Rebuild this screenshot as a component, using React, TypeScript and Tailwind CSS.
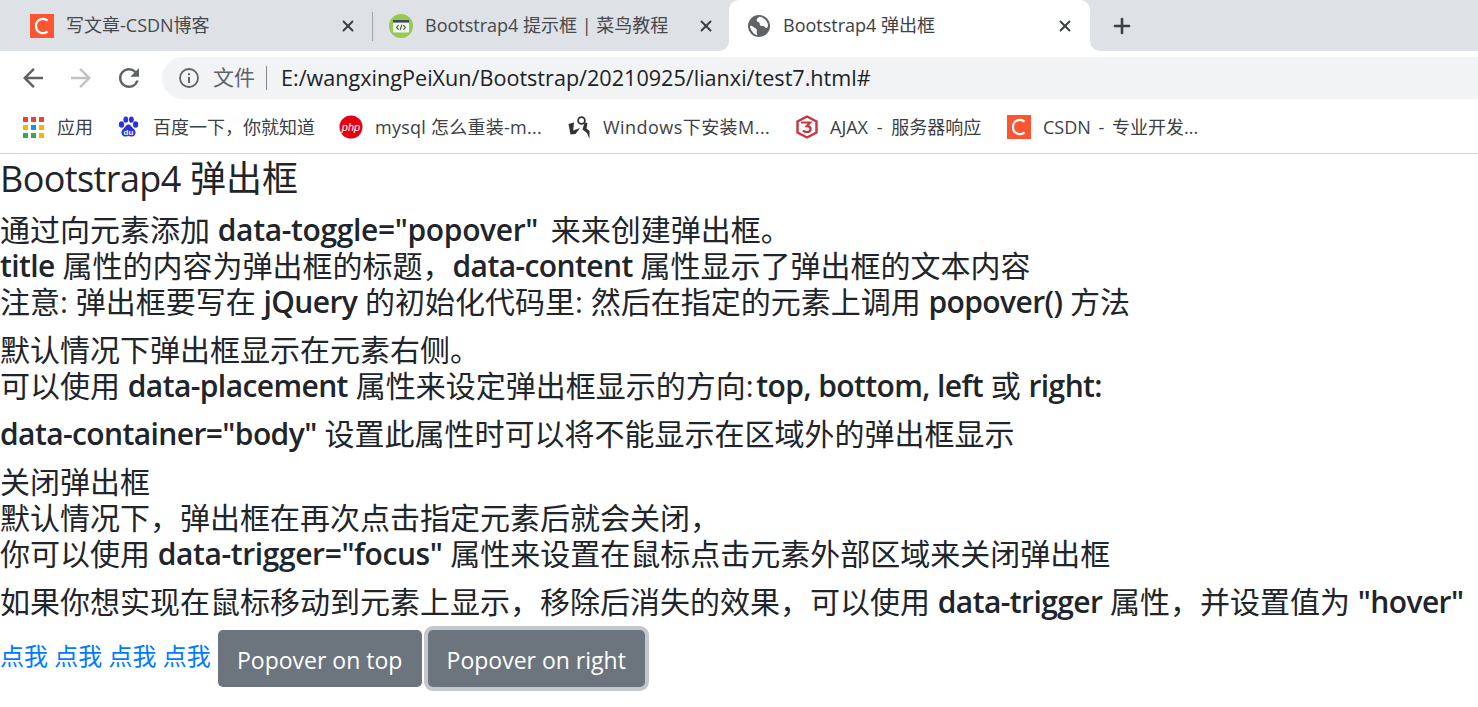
import type { ReactNode } from "react"
import { Plus, X } from "lucide-react"

const fontStack = "font-['Open_Sans','Noto_Sans_CJK_SC',sans-serif]"

function CsdnIcon({ size = 24 }: { size?: number }) {
  return (
    <svg width={size} height={size} viewBox="0 0 24 24" className="shrink-0">
      <rect width="24" height="24" fill="#fc5531" />
      <path d="M17.6 6.6A7 7 0 0 0 6 12a7 7 0 0 0 11.6 5.4" fill="none" stroke="#fff" strokeWidth="2.2" />
    </svg>
  )
}

function RunoobIcon() {
  return (
    <svg width="24" height="24" viewBox="0 0 24 24" className="shrink-0">
      <circle cx="12" cy="12" r="12" fill="#96c952" />
      <rect x="4" y="6" width="16" height="12.5" rx="0.8" fill="#f2f4ef" />
      <rect x="4" y="6" width="16" height="2.6" fill="#3e4a52" />
      <path d="M9.6 11.2 7.6 13.4l2 2.2M14.4 11.2l2 2.2-2 2.2M12.9 10.8l-1.8 5.2" fill="none" stroke="#4a5548" strokeWidth="1.1" />
    </svg>
  )
}

function GlobeIcon() {
  return (
    <svg width="22" height="22" viewBox="0 0 22 22" className="shrink-0">
      <circle cx="11" cy="11" r="11" fill="#5f6368" />
      <path d="M11.5 1.8C9.8 3 8.4 4.2 8.6 5.6c.2 1.4 2 1.4 2.8 2.2.8 1-.2 2 1 2.8 1 .6 2.4 0 3.4.5 1 .4 1.2 1.8 2.2 2 .9.2 1.6-1 2-2.4V9.4c-1-3.8-4.4-7.2-8.5-7.6ZM1.8 10.6c1.5.2 2.8.7 4 1.6 1 .8 2.2 1.2 2.9 2.2.7 1-.2 2-.1 3 .1 1 .8 1.9.9 2.8-4-.9-7.2-4.8-7.6-9.6Z" fill="#fff" />
    </svg>
  )
}

function AppsIcon() {
  const colors = ["#ea4335", "#ea4335", "#ea4335", "#ffb300", "#1a8cff", "#ffb300", "#34a853", "#34a853", "#ffb300"]
  return (
    <div className="grid grid-cols-3 gap-[3px] w-[21px] shrink-0">
      {colors.map((c, i) => (
        <div key={i} className="w-[5px] h-[5px]" style={{ backgroundColor: c }} />
      ))}
    </div>
  )
}

function BaiduIcon() {
  return (
    <svg width="21" height="22" viewBox="0 0 21 22" className="shrink-0">
      <g fill="#2932e1">
        <ellipse cx="3.5" cy="8.5" rx="2.6" ry="3.2" />
        <ellipse cx="7.8" cy="3.6" rx="2.4" ry="3.2" />
        <ellipse cx="13.4" cy="3.6" rx="2.4" ry="3.2" />
        <ellipse cx="17.6" cy="8.5" rx="2.6" ry="3.2" />
        <path d="M10.5 8.5c-2.4 0-3 2.6-5 4.2-2 1.6-2.4 3.4-1.8 5.2.7 2.2 3 2.8 4.4 2.6 1-.2 1.6-.4 2.4-.4s1.4.2 2.4.4c1.4.2 3.7-.4 4.4-2.6.6-1.8.2-3.6-1.8-5.2-2-1.6-2.6-4.2-5-4.2Z" />
      </g>
      <text x="10.5" y="19" textAnchor="middle" fontSize="8" fontWeight="700" fill="#fff" fontFamily="Liberation Sans, sans-serif">du</text>
    </svg>
  )
}

function PhpIcon() {
  return (
    <svg width="24" height="24" viewBox="0 0 24 24" className="shrink-0">
      <circle cx="12" cy="12" r="11.5" fill="#e60012" />
      <text x="12" y="15.5" textAnchor="middle" fontSize="11" fontStyle="italic" fill="#fff" fontFamily="Liberation Sans, sans-serif">php</text>
    </svg>
  )
}

function WinLogo() {
  return (
    <svg width="23" height="24" viewBox="0 0 23 24" className="shrink-0">
      <path d="M0.5 9 6 7.5 5.2 15.5 12 13 7.5 19 2.5 19.5Z" fill="#333" />
      <circle cx="13.5" cy="5.5" r="3.4" fill="none" stroke="#333" strokeWidth="1.8" />
      <path d="M16.5 7.5 14.5 14.5 19 18 21.5 24 21.5 16 18.5 13.5 19.5 8Z" fill="#333" />
    </svg>
  )
}

function AjaxIcon() {
  return (
    <svg width="22" height="24" viewBox="0 0 22 24" className="shrink-0">
      <path d="M11 1.5 20.5 6.5V17.5L11 22.5 1.5 17.5V6.5Z" fill="none" stroke="#c8343f" strokeWidth="2.4" />
      <path d="M5 7.5h9l-3.2 3.6c2.4 0 3.8 1.1 3.8 2.8 0 1.8-1.6 3.1-3.8 3.1-1.5 0-2.8-.5-3.8-1.4" fill="none" stroke="#c8343f" strokeWidth="2.2" />
    </svg>
  )
}

function Bookmark({ icon, label, width, iconWidth, extra = "" }: { icon: ReactNode; label: string; width: string; iconWidth: string; extra?: string }) {
  return (
    <div className={`flex items-center shrink-0 ${width}`}>
      <div className={`flex items-center shrink-0 ${iconWidth}`}>{icon}</div>
      <span className={`text-[18px] text-[#3c4043] whitespace-nowrap ${extra}`}>{label}</span>
    </div>
  )
}

function B({ children, className = "tracking-[-0.6px]" }: { children: ReactNode; className?: string }) {
  return <b className={`font-semibold ${className}`}>{children}</b>
}

function Browser() {
  return (
    <header className={`${fontStack} border-b border-[#d3d4d6]`}>
      {/* tab strip */}
      <div className="flex h-[51px] bg-[#dee1e6]">
        <div className="flex items-center w-[372px] pl-[30px] shrink-0">
          <CsdnIcon />
          <span className="ml-3 text-[18px] text-[#45484c] whitespace-nowrap">写文章-CSDN博客</span>
          <X className="ml-auto mr-[15px] text-[#3c4043]" size={18} strokeWidth={2.6} />
        </div>
        <div className="w-px h-[29px] mt-[12px] bg-[#9fa2a6] shrink-0" />
        <div className="flex items-center w-[356px] pl-[16px] shrink-0">
          <RunoobIcon />
          <span className="ml-3 text-[18px] text-[#45484c] whitespace-nowrap">Bootstrap4 提示框 | 菜鸟教程</span>
          <X className="ml-auto mr-[14px] text-[#3c4043]" size={18} strokeWidth={2.6} />
        </div>
        <div className="relative flex items-center w-[361px] pl-[19px] bg-white rounded-t-[10px] shrink-0">
          <div className="absolute -left-[10px] bottom-0 w-[10px] h-[10px] bg-white">
            <div className="w-full h-full bg-[#dee1e6] rounded-br-[10px]" />
          </div>
          <div className="absolute -right-[10px] bottom-0 w-[10px] h-[10px] bg-white">
            <div className="w-full h-full bg-[#dee1e6] rounded-bl-[10px]" />
          </div>
          <GlobeIcon />
          <span className="ml-[13px] text-[18px] text-[#3c4043] whitespace-nowrap">Bootstrap4 弹出框</span>
          <X className="ml-auto mr-[16px] text-[#3c4043]" size={18} strokeWidth={2.6} />
        </div>
        <div className="flex items-center pl-[20px]">
          <Plus className="text-[#3c4043]" size={24} strokeWidth={2.6} />
        </div>
      </div>

      {/* address bar */}
      <div className="flex items-center h-[52px] pt-[2px] bg-white">
        <div className="flex items-center w-[162px] shrink-0 pl-[18px] gap-[18px]">
          <svg width="30" height="30" viewBox="0 0 24 24" fill="#5f6368" className="shrink-0">
            <path d="M20 11H7.83l5.59-5.59L12 4l-8 8 8 8 1.41-1.41L7.83 13H20v-2z" />
          </svg>
          <svg width="30" height="30" viewBox="0 0 24 24" fill="#c0c2c5" className="shrink-0">
            <path d="M12 4l-1.41 1.41L16.17 11H4v2h12.17l-5.58 5.59L12 20l8-8z" />
          </svg>
          <svg width="30" height="30" viewBox="0 0 24 24" fill="#5f6368" className="shrink-0">
            <path d="M17.65 6.35A7.958 7.958 0 0 0 12 4c-4.42 0-7.99 3.58-7.99 8s3.57 8 7.99 8c3.73 0 6.84-2.55 7.73-6h-2.08A5.99 5.99 0 0 1 12 18c-3.31 0-6-2.69-6-6s2.69-6 6-6c1.66 0 3.14.69 4.22 1.78L13 11h7V4l-2.35 2.35z" />
          </svg>
        </div>
        <div className="flex items-center flex-1 h-[42px] rounded-l-[21px] bg-[#f1f3f4] pl-[17px]">
          <svg width="20" height="20" viewBox="0 0 20 20" className="shrink-0">
            <circle cx="10" cy="10" r="9" fill="none" stroke="#5f6368" strokeWidth="1.8" />
            <rect x="9" y="9" width="2" height="6" fill="#5f6368" />
            <rect x="9" y="5.2" width="2" height="2" fill="#5f6368" />
          </svg>
          <span className="ml-[14px] text-[21px] text-[#5f6368]">文件</span>
          <div className="ml-[11px] w-px h-[24px] bg-[#80868b]" />
          <span className="ml-[14px] text-[21.6px] text-[#202124] whitespace-nowrap">E:/wangxingPeiXun/Bootstrap/20210925/lianxi/test7.html#</span>
        </div>
      </div>

      {/* bookmarks */}
      <div className="flex items-center h-[50px] pb-[2px] bg-white pl-[23px]">
        <Bookmark icon={<AppsIcon />} label="应用" width="w-[95px]" iconWidth="w-[34px]" />
        <Bookmark icon={<BaiduIcon />} label="百度一下，你就知道" width="w-[221px]" iconWidth="w-[35px]" />
        <Bookmark icon={<PhpIcon />} label="mysql 怎么重装-m..." width="w-[229px]" iconWidth="w-[36px]" extra="tracking-[0.25px]" />
        <Bookmark icon={<WinLogo />} label="Windows下安装M..." width="w-[228px]" iconWidth="w-[35px]" extra="tracking-[0.45px]" />
        <Bookmark icon={<AjaxIcon />} label="AJAX - 服务器响应" width="w-[211px]" iconWidth="w-[34px]" extra="[word-spacing:4px]" />
        <Bookmark icon={<CsdnIcon />} label="CSDN - 专业开发..." width="w-[220px]" iconWidth="w-[36px]" extra="[word-spacing:3px]" />
      </div>
    </header>
  )
}

export default function App() {
  return (
    <div className={`${fontStack} h-[707px] overflow-hidden bg-white text-[#212529]`}>
      <Browser />
      <main className="pt-[3px] text-[30px] leading-[36px] whitespace-nowrap">
        <h3 className="text-[36px] leading-[43px] font-normal mb-[12px]">
          <span className="font-medium tracking-[-0.6px]">Bootstrap4</span> 弹出框
        </h3>
        <p className="mb-[12px]">
          通过向元素添加 <B className="tracking-[-0.35px] mr-[5px]">data-toggle="popover"</B> 来来创建弹出框。<br />
          <B>title</B> 属性的内容为弹出框的标题，<B>data-content</B> 属性显示了弹出框的文本内容<br />
          注意: 弹出框要写在 <B>jQuery</B> 的初始化代码里: 然后在指定的元素上调用 <B>popover()</B> 方法
        </p>
        <p className="mb-[12px]">
          默认情况下弹出框显示在元素右侧。<br />
          可以使用 <B>data-placement</B> 属性来设定弹出框显示的方向: <B className="tracking-[-0.6px] -ml-[5px]">top, bottom, left</B> 或 <B>right:</B>
        </p>
        <p className="mb-[12px]">
          <B>data-container="body"</B> 设置此属性时可以将不能显示在区域外的弹出框显示
        </p>
        <p className="mb-[12px]">
          关闭弹出框<br />
          默认情况下，弹出框在再次点击指定元素后就会关闭，<br />
          你可以使用 <B className="tracking-[-0.4px]">data-trigger="focus"</B> 属性来设置在鼠标点击元素外部区域来关闭弹出框
        </p>
        <p className="mb-[10px]">
          如果你想实现在鼠标移动到元素上显示，移除后消失的效果，可以使用 <B>data-trigger</B> 属性，并设置值为 <B>"hover"</B>
        </p>
        <div className="flex items-center">
          <span className="mb-[6px] text-[#007bff] text-[24px]">点我 点我 点我 点我</span>
          <button className="ml-[7px] w-[204px] h-[57px] pt-[3px] rounded-[5px] bg-[#6c757d] text-white text-[23px]">Popover on top</button>
          <button className="ml-[6px] w-[217px] h-[57px] pt-[3px] rounded-[5px] bg-[#6c757d] text-white text-[23px] shadow-[0_0_0_4px_#c4c7cc]">Popover on right</button>
        </div>
      </main>
    </div>
  )
}
